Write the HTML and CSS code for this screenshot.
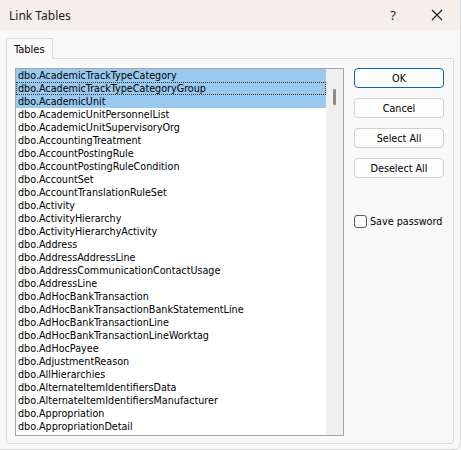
FILE: index.html
```html
<!DOCTYPE html>
<html lang="en">
<head>
    <meta charset="UTF-8">
    <title>Link Tables</title>
    <link rel="stylesheet" href="styles.css">
</head>
<body>
    <div class="dialog">
        <div class="titlebar">
            <span class="title">Link Tables</span>
            <span class="help">?</span>
            <span class="close">
                <svg width="12" height="12" viewBox="0 0 12 12"><path d="M1 1 L11 11 M11 1 L1 11" stroke="#1a1a1a" stroke-width="1.1" fill="none"/></svg>
            </span>
        </div>

        <div class="tabs">
            <div class="tab">Tables</div>
        </div>

        <div class="panel">
            <div class="listbox">
                <ul class="items">
                    <li class="selected">dbo.AcademicTrackTypeCategory</li>
                    <li class="selected focused">dbo.AcademicTrackTypeCategoryGroup</li>
                    <li class="selected">dbo.AcademicUnit</li>
                    <li>dbo.AcademicUnitPersonnelList</li>
                    <li>dbo.AcademicUnitSupervisoryOrg</li>
                    <li>dbo.AccountingTreatment</li>
                    <li>dbo.AccountPostingRule</li>
                    <li>dbo.AccountPostingRuleCondition</li>
                    <li>dbo.AccountSet</li>
                    <li>dbo.AccountTranslationRuleSet</li>
                    <li>dbo.Activity</li>
                    <li>dbo.ActivityHierarchy</li>
                    <li>dbo.ActivityHierarchyActivity</li>
                    <li>dbo.Address</li>
                    <li>dbo.AddressAddressLine</li>
                    <li>dbo.AddressCommunicationContactUsage</li>
                    <li>dbo.AddressLine</li>
                    <li>dbo.AdHocBankTransaction</li>
                    <li>dbo.AdHocBankTransactionBankStatementLine</li>
                    <li>dbo.AdHocBankTransactionLine</li>
                    <li>dbo.AdHocBankTransactionLineWorktag</li>
                    <li>dbo.AdHocPayee</li>
                    <li>dbo.AdjustmentReason</li>
                    <li>dbo.AllHierarchies</li>
                    <li>dbo.AlternateItemIdentifiersData</li>
                    <li>dbo.AlternateItemIdentifiersManufacturer</li>
                    <li>dbo.Appropriation</li>
                    <li>dbo.AppropriationDetail</li>
                </ul>
                <div class="scrollbar">
                    <div class="thumb"></div>
                </div>
            </div>

            <div class="side">
                <button class="btn btn-default">OK</button>
                <button class="btn">Cancel</button>
                <button class="btn">Select All</button>
                <button class="btn">Deselect All</button>
                <label class="check">
                    <span class="box"></span>
                    Save password
                </label>
            </div>
        </div>
    </div>
</body>
</html>
```

FILE: styles.css
```css
* {
    margin: 0;
    padding: 0;
    box-sizing: border-box;
}

body {
    background: #f9f9f9;
    font-family: 'DejaVu Sans Condensed', 'DejaVu Sans', sans-serif;
    font-size: 10.7px;
    color: #000;
}

.dialog {
    width: 461px;
    height: 450px;
    background: #f9f9f9;
    border-right: 1px solid #d8d8d8;
    border-bottom: 1px solid #d8d8d8;
    border-bottom-right-radius: 7px;
    overflow: hidden;
}

.titlebar {
    height: 30px;
    background: #f4efeb;
    display: flex;
    align-items: center;
    padding-left: 9px;
    font-family: 'Noto Sans', 'Open Sans', sans-serif;
    font-size: 12px;
    color: #1a1a1a;
}

.title {
    flex: 1;
}

.help {
    width: 14px;
    text-align: center;
    margin-right: 31px;
    font-size: 13px;
}

.close {
    width: 12px;
    height: 12px;
    margin-right: 17px;
    display: flex;
}

.tabs {
    display: flex;
    padding: 7px 0 0 6px;
}

.tab {
    width: 47px;
    height: 21px;
    border: 1px solid #dcdcdc;
    border-bottom: none;
    background: #f9f9f9;
    padding: 4px 0 0 7px;
    font-size: 11px;
    position: relative;
    top: 1px;
}

.panel {
    margin-left: 6px;
    width: 448px;
    height: 386px;
    border: 1px solid #dcdcdc;
    border-radius: 0 0 3px 3px;
    display: flex;
    padding: 9px 0 0 8px;
}

.listbox {
    width: 329px;
    height: 368px;
    border: 1px solid #a4a4a4;
    background: #fff;
    display: flex;
}

.items {
    list-style: none;
    flex: 1;
}

.items li {
    height: 13px;
    line-height: 13px;
    padding-left: 2px;
    white-space: nowrap;
}

.items li.selected {
    background: #99c9ef;
}

.items li.focused {
    outline: 1px dotted #333;
    outline-offset: -1px;
}

.scrollbar {
    width: 17px;
    background: #f0f0f0;
    padding: 20px 0 0 7px;
}

.thumb {
    width: 3px;
    height: 16px;
    background: #8a8a8a;
    border-radius: 1px;
}

.side {
    display: flex;
    flex-direction: column;
    gap: 10px;
    margin-left: 10px;
}

.btn {
    width: 90px;
    height: 20px;
    border: 1px solid #d0d0d0;
    border-radius: 4px;
    background: #fdfdfd;
    font-family: inherit;
    font-size: inherit;
    color: #000;
}

.btn-default {
    border-color: #0067c0;
}

.check {
    display: flex;
    align-items: center;
    gap: 3px;
    margin-top: 27px;
}

.box {
    width: 13px;
    height: 13px;
    border: 1px solid #5c5c5c;
    border-radius: 3px;
    background: #fbfbfb;
}
```
